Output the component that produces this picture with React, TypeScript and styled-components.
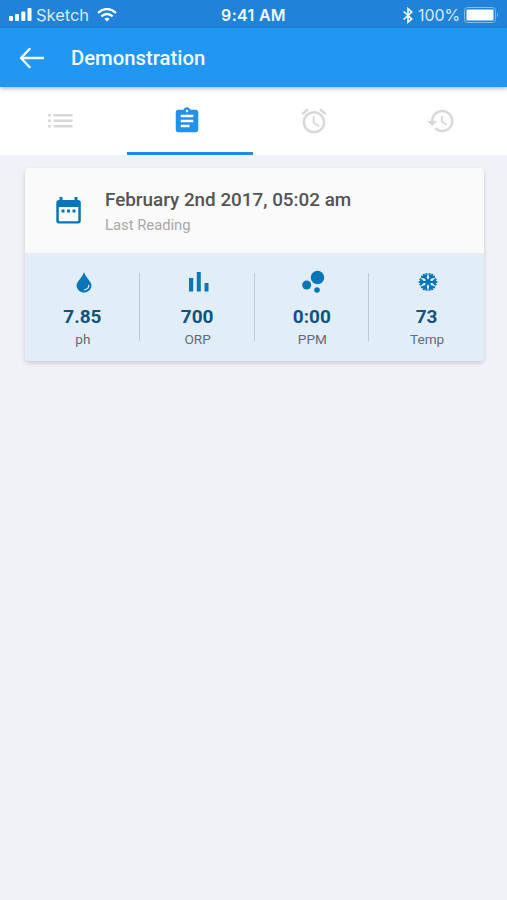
import React from "react";
import styled, { createGlobalStyle } from "styled-components";

const GlobalStyle = createGlobalStyle`
  * { box-sizing: border-box; }
  body { margin: 0; background: #f0f2f8; font-family: Roboto, sans-serif; }
`;

const Screen = styled.main`
  min-height: 900px;
  background: #f0f2f8;
`;

const StatusBar = styled.div`
  height: 28px;
  padding: 2px 8px 0 9px;
  display: grid;
  grid-template-columns: 1fr auto 1fr;
  align-items: center;
  background: #2083d9;
  color: #fff;
  font: 400 16.5px/26px Inter, sans-serif;
`;

const StatusGroup = styled.div<{ $end?: boolean }>`
  display: flex;
  align-items: center;
  justify-content: ${(p) => (p.$end ? "flex-end" : "flex-start")};
`;

const Carrier = styled.span`
  margin: 0 8px 0 4px;
  color: #d9ebfb;
  letter-spacing: -0.05px;
`;

const Clock = styled.span`
  padding-right: 1px;
  font-weight: 600;
  font-size: 16px;
  letter-spacing: 0.3px;
  color: #f2f9ff;
`;

const Charge = styled.span`
  margin: 0 4px 0 5px;
  color: #d9ebfb;
  font-size: 16px;
  letter-spacing: -0.1px;
`;

const AppBar = styled.header`
  position: relative;
  height: 59px;
  padding-left: 19px;
  display: flex;
  align-items: center;
  gap: 26px;
  background: #2196f3;
  color: #f4faff;
  box-shadow: 0 2px 4px rgba(0, 0, 0, 0.25);
`;

const Title = styled.h1`
  margin: 0;
  font-size: 20.3px;
  font-weight: 500;
  line-height: 24px;
`;

const BackButton = styled.button`
  width: 26px;
  height: 24px;
  padding: 0;
  border: 0;
  background: none;
  color: inherit;
  display: flex;
`;

const Tabs = styled.nav`
  height: 68px;
  display: grid;
  grid-template-columns: repeat(4, 1fr);
  background: #fff;
`;

const Tab = styled.button<{ $active?: boolean }>`
  padding: 3px 6px 3px 0;
  border: 0;
  background: linear-gradient(#2389e0, #2389e0) left -0.75px bottom / ${(p) => (p.$active ? "100% 3px" : "0 0")} no-repeat;
  display: flex;
  align-items: center;
  justify-content: center;
  color: ${(p) => (p.$active ? "#2191ee" : "#d8d8d8")};
`;

const Card = styled.section`
  margin: 13px 23px 0 25px;
  border-radius: 4px;
  overflow: hidden;
  background: #e1eef7;
  box-shadow: 0 2px 4px rgba(0, 0, 0, 0.16);
`;

const CardHeader = styled.div`
  height: 85px;
  padding: 3px 0 0 29px;
  display: flex;
  align-items: center;
  gap: 22px;
  background: #fafafa;

  svg { margin-top: -3px; }
`;

const ReadingDate = styled.h2`
  margin: 0;
  font-size: 18.85px;
  font-weight: 500;
  line-height: 26px;
  color: #545454;
`;

const Caption = styled.p`
  margin: 0;
  font-size: 14.8px;
  line-height: 24px;
  color: #a8a8a8;
`;

const Metrics = styled.div`
  height: 108px;
  display: grid;
  grid-template-columns: repeat(4, 1fr);
  align-items: center;
`;

const Metric = styled.div`
  height: 68px;
  padding-left: 1px;
  display: flex;
  flex-direction: column;
  align-items: center;
  border-right: 1px solid #bccad3;
  &:last-child { border-right-color: transparent; }
  > * { flex-shrink: 0; }
`;

const MetricIcon = styled.div`
  height: 28px;
  margin-top: -5px;
  padding-left: 3px;
  display: flex;
  align-items: center;
  color: #0876b8;
`;

const MetricValue = styled.strong`
  margin-top: 9px;
  font-size: 19px;
  font-weight: 700;
  line-height: 24px;
  color: #12527f;
`;

const MetricLabel = styled.span`
  padding-left: 1px;
  font-size: 13.6px;
  line-height: 20px;
  color: #666b6f;
`;

type IconProps = { size?: number; d: string };
const Icon = ({ size = 30, d }: IconProps) => (
  <svg width={size} height={size} viewBox="0 0 24 24" fill="currentColor">
    <path d={d} />
  </svg>
);

const icons = {
  clipboard:
    "M19 3h-4.18C14.4 1.84 13.3 1 12 1s-2.4.84-2.82 2H5c-1.1 0-2 .9-2 2v14c0 1.1.9 2 2 2h14c1.1 0 2-.9 2-2V5c0-1.1-.9-2-2-2zm-7 0c.55 0 1 .45 1 1s-.45 1-1 1-1-.45-1-1 .45-1 1-1zm2 14H7v-2h7v2zm3-4H7v-2h10v2zm0-4H7V7h10v2z",
  alarm:
    "M22 5.72l-4.6-3.86-1.29 1.53 4.6 3.86L22 5.72zM7.88 3.39L6.6 1.86 2 5.71l1.29 1.53 4.59-3.85zM12.5 8H11v6l4.75 2.85.75-1.23-4-2.37V8zM12 4c-4.97 0-9 4.03-9 9s4.02 9 9 9 9-4.03 9-9-4.03-9-9-9zm0 16c-3.87 0-7-3.13-7-7s3.13-7 7-7 7 3.13 7 7-3.13 7-7 7z",
  history:
    "M13 3c-4.97 0-9 4.03-9 9H1l3.89 3.89.07.14L9 12H6c0-3.87 3.13-7 7-7s7 3.13 7 7-3.13 7-7 7c-1.93 0-3.68-.79-4.94-2.06l-1.42 1.42C8.27 19.99 10.51 21 13 21c4.97 0 9-4.03 9-9s-4.03-9-9-9zm-1 5v5l4.28 2.54.72-1.21-3.5-2.08V8H12z",
};

const ListIcon = () => (
  <svg width="26" height="16" viewBox="0 0 26 16" fill="currentColor">
    <path d="M1 1h3v2.5H1zM6.5 1h19v2.5h-19zM1 6.5h3V9H1zM6.5 6.5h19V9h-19zM1 12h3v2.5H1zM6.5 12h19v2.5h-19z" />
  </svg>
);

const BackIcon = () => (
  <svg width="26" height="24" viewBox="0 0 26 24" fill="none" stroke="currentColor" strokeWidth="2.5" strokeLinecap="round" strokeLinejoin="round">
    <path d="M24 12H2M10.5 3L2 12l8.500 9" />
  </svg>
);

const CalendarIcon = () => (
  <svg width="29" height="29" viewBox="0 0 29 29">
    <path fill="#0876b8" fillRule="evenodd" d="M5.500 1h3v3h12V1h3v3h.5q2.800 0 2.800 2.800v18Q26.800 27.500 24 27.500H5Q2.300 27.500 2.300 24.800v-18Q2.300 4 5 4h.5zM4.800 11v13.200q0 1 1 1h17.500q1 0 1-1V11z" />
    <path fill="#0876b8" d="M7.500 13.500h3v3h-3zM13 13.500h3v3h-3zM18.500 13.500h3v3h-3z" />
  </svg>
);

const DropIcon = () => (
  <svg width="16" height="21" viewBox="0 0 16 21">
    <path fill="currentColor" d="M8 .3Q8.700 2.700 12 7c2 2.600 3.500 4.400 3.500 6.500a7.500 7.200 0 0 1-15 0C.5 11.400 2 9.600 4 7Q7.300 2.700 8 .3z" />
    <path d="M12.800 13.500q-.3 3.700-4.300 4.300" fill="none" stroke="#d6e9f5" strokeWidth="1.300" strokeLinecap="round" />
  </svg>
);

const BarsIcon = () => (
  <svg width="20" height="20" viewBox="0 0 20 20" fill="currentColor">
    <path d="M0 6h4.200v13.500H0zM7.800 0h4v19.500h-4zM15.500 11h4v8.500h-4z" />
  </svg>
);

const BubblesIcon = () => (
  <svg width="24" height="24" viewBox="0 0 24 24" fill="currentColor">
    <circle cx="16.500" cy="7.500" r="6.700" />
    <circle cx="5.700" cy="15" r="4.500" />
    <circle cx="16" cy="20" r="2.800" />
  </svg>
);

const arms = [30, 90, 150, 210, 270, 330];
const SnowIcon = () => (
  <svg width="20" height="20" viewBox="-10 -10 20 20" fill="none" stroke="currentColor" strokeWidth="2.100">
    {arms.map((angle) => (
      <path key={angle} transform={`rotate(${angle})`} d="M0 0V-9.300M-3.300-8.200L0-4.800l3.300-3.400" />
    ))}
    <circle r="2.800" fill="currentColor" stroke="none" />
  </svg>
);

const SignalIcon = () => (
  <svg width="23" height="14" viewBox="0 0 23 14" fill="#fff">
    <rect y="8" width="4" height="5" rx="1" />
    <rect x="6" y="6" width="4" height="7" rx="1" />
    <rect x="12.300" y="3.500" width="4" height="9.500" rx="1" />
    <rect x="18.500" width="4" height="13" rx="1" />
  </svg>
);

const WifiIcon = () => (
  <svg width="20" height="14" viewBox="0 0 20 14" fill="none" stroke="#fff" strokeWidth="2.300">
    <path d="M1 4.800q9-7.500 18 0M4.300 8.300q5.700-4.700 11.400 0" />
    <path d="M7.300 10.700q2.700-2 5.400 0L10 13.500z" fill="#fff" stroke="none" />
  </svg>
);

const BluetoothIcon = () => (
  <svg width="10" height="17" viewBox="0 0 10 17" fill="none" stroke="#eef7ff" strokeWidth="1.700">
    <path d="M.7 4.500l8 7.500L5 15.200v-13.500L8.700 5l-8 7.500" />
  </svg>
);

const BatteryIcon = () => (
  <svg width="35" height="16" viewBox="0 0 35 16">
    <rect x=".5" y=".5" width="31" height="15" rx="3" fill="none" stroke="#83bbea" />
    <rect x="2.500" y="2.500" width="27" height="11" rx="1" fill="#fff" />
    <path d="M33 5.500q2 2.500 0 5z" fill="#83bbea" />
  </svg>
);

const metrics = [
  { icon: <DropIcon />, value: "7.85", label: "ph" },
  { icon: <BarsIcon />, value: "700", label: "ORP" },
  { icon: <BubblesIcon />, value: "0:00", label: "PPM" },
  { icon: <SnowIcon />, value: "73", label: "Temp" },
];

export default function App() {
  return (
    <Screen>
      <GlobalStyle />
      <StatusBar>
        <StatusGroup>
          <SignalIcon />
          <Carrier>Sketch</Carrier>
          <WifiIcon />
        </StatusGroup>
        <Clock>9:41 AM</Clock>
        <StatusGroup $end>
          <BluetoothIcon />
          <Charge>100%</Charge>
          <BatteryIcon />
        </StatusGroup>
      </StatusBar>
      <AppBar>
        <BackButton aria-label="Back"><BackIcon /></BackButton>
        <Title>Demonstration</Title>
      </AppBar>
      <Tabs>
        <Tab aria-label="List"><ListIcon /></Tab>
        <Tab aria-label="Readings" $active><Icon d={icons.clipboard} /></Tab>
        <Tab aria-label="Alarms"><Icon d={icons.alarm} /></Tab>
        <Tab aria-label="History"><Icon d={icons.history} /></Tab>
      </Tabs>
      <Card>
        <CardHeader>
          <CalendarIcon />
          <div>
            <ReadingDate>February 2nd 2017, 05:02 am</ReadingDate>
            <Caption>Last Reading</Caption>
          </div>
        </CardHeader>
        <Metrics>
          {metrics.map((m) => (
            <Metric key={m.label}>
              <MetricIcon>{m.icon}</MetricIcon>
              <MetricValue>{m.value}</MetricValue>
              <MetricLabel>{m.label}</MetricLabel>
            </Metric>
          ))}
        </Metrics>
      </Card>
    </Screen>
  );
}
